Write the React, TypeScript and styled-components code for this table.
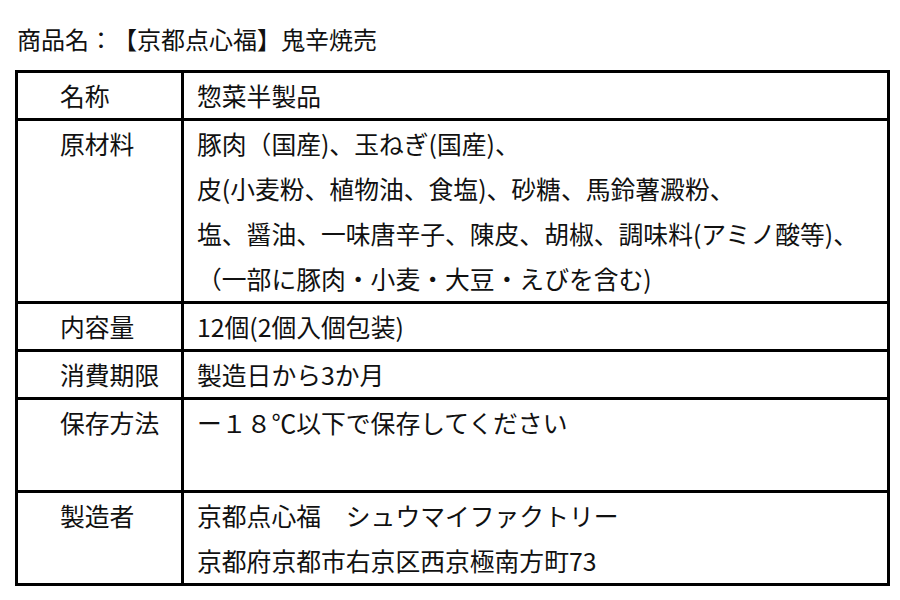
import React from 'react';
import styled, { createGlobalStyle } from 'styled-components';

const GlobalStyle = createGlobalStyle`
    html, body {
        margin: 0;
        padding: 0;
        background: #ffffff;
    }

    body {
        font-family: "Noto Sans CJK JP", "Noto Sans", sans-serif;
        color: #111111;
        text-spacing-trim: space-all;
    }
`;

const Page = styled.div`
    width: 900px;
    height: 600px;
    box-sizing: border-box;
    padding: 22px 10px 0 15px;
`;

const Title = styled.h1`
    margin: 0 0 14px 2px;
    font-size: 24px;
    font-weight: 400;
    line-height: 34px;
`;

const Sheet = styled.div`
    width: 875px;
    box-sizing: border-box;
    border: 3px solid #000;
`;

const Row = styled.div<{ $first?: boolean }>`
    display: grid;
    grid-template-columns: 166px 1fr;
    border-top: ${(props) => (props.$first ? 'none' : '3px solid #000')};
`;

const Label = styled.div`
    box-sizing: border-box;
    border-right: 3px solid #000;
    padding-left: 42px;
    font-size: 24.8px;
    line-height: 45px;
`;

const Value = styled.div`
    padding-left: 13px;
    font-size: 24.8px;
    line-height: 45px;
`;

const Line = styled.div`
    min-height: 45px;
    white-space: nowrap;
`;

const rows: { label: string; lines: string[] }[] = [
    { label: '名称', lines: ['惣菜半製品'] },
    {
        label: '原材料',
        lines: [
            '豚肉（国産)、玉ねぎ(国産)、',
            '皮(小麦粉、植物油、食塩)、砂糖、馬鈴薯澱粉、',
            '塩、醤油、一味唐辛子、陳皮、胡椒、調味料(アミノ酸等)、',
            '（一部に豚肉・小麦・大豆・えびを含む)',
        ],
    },
    { label: '内容量', lines: ['12個(2個入個包装)'] },
    { label: '消費期限', lines: ['製造日から3か月'] },
    { label: '保存方法', lines: ['ー１８℃以下で保存してください', ''] },
    { label: '製造者', lines: ['京都点心福　シュウマイファクトリー', '京都府京都市右京区西京極南方町73'] },
];

const App = () => (
    <Page>
        <GlobalStyle />
        <Title>商品名：【京都点心福】鬼辛焼売</Title>
        <Sheet>
            {rows.map((row, index) => (
                <Row key={row.label} $first={index === 0}>
                    <Label>{row.label}</Label>
                    <Value>
                        {row.lines.map((line, i) => (
                            <Line key={i}>{line}</Line>
                        ))}
                    </Value>
                </Row>
            ))}
        </Sheet>
    </Page>
);

export default App;
